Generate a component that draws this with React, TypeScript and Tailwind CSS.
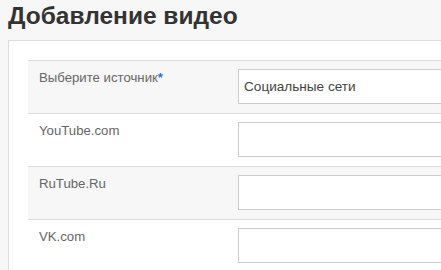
export default function App() {
  const rows = [
    { label: "Выберите источник", required: true, value: "Социальные сети", gray: true },
    { label: "YouTube.com", gray: false },
    { label: "RuTube.Ru", gray: true },
    { label: "VK.com", gray: false },
  ];

  return (
    <div className="h-[270px] w-[441px] overflow-hidden bg-[#f7f7f7] font-['Liberation_Sans',Arial,sans-serif]">
      <h1 className="pl-2 pt-[1px] text-[24.5px] font-bold leading-[30px] text-[#333]">
        Добавление видео
      </h1>
      <div className="ml-2 mt-[9px] w-[700px] border border-[#dcdcdc] bg-white pl-[19px] pt-[19px]">
        {rows.map((r) => (
          <div
            key={r.label}
            className={`grid h-[53px] grid-cols-[210px_1fr] border-t border-[#dcdcdc] ${r.gray ? "bg-[#f7f7f7]" : "bg-white"}`}
          >
            <div className="pl-[11px] pt-[8px] text-[13.2px] leading-[18px] text-[#666]">
              {r.label}
              {r.required && <span className="font-bold text-[#2f6fd6]">*</span>}
            </div>
            <div className="pt-[8px]">
              <input
                readOnly
                value={r.value ?? ""}
                className="h-[35px] w-[400px] border border-[#cccccc] bg-white px-[5px] text-[13.6px] text-[#444] outline-none"
              />
            </div>
          </div>
        ))}
      </div>
    </div>
  );
}
